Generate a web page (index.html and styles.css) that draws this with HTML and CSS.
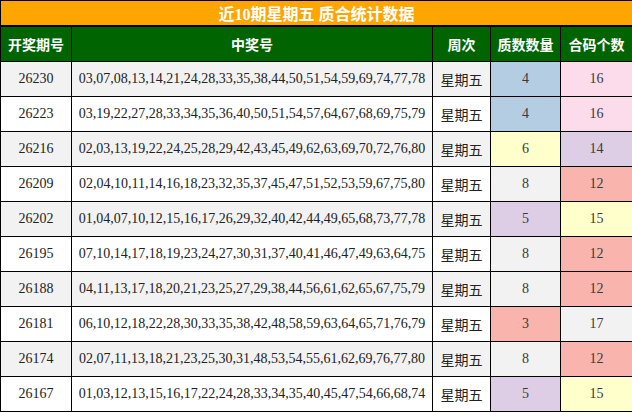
FILE: index.html
```html
<!DOCTYPE html>
<html lang="zh-CN">
<head>
<meta charset="utf-8">
<title>近10期星期五 质合统计数据</title>
<link rel="stylesheet" href="styles.css">
</head>
<body>
<table class="stats">
  <colgroup>
    <col class="c-issue">
    <col class="c-nums">
    <col class="c-week">
    <col class="c-prime">
    <col class="c-comp">
  </colgroup>
  <thead>
    <tr class="title-row"><th colspan="5">近10期星期五 质合统计数据</th></tr>
    <tr class="head-row">
      <th>开奖期号</th><th>中奖号</th><th>周次</th><th>质数数量</th><th>合码个数</th>
    </tr>
  </thead>
  <tbody>
    <tr class="odd"><td>26230</td><td>03,07,08,13,14,21,24,28,33,35,38,44,50,51,54,59,69,74,77,78</td><td>星期五</td><td class="blue">4</td><td class="pink">16</td></tr>
    <tr><td>26223</td><td>03,19,22,27,28,33,34,35,36,40,50,51,54,57,64,67,68,69,75,79</td><td>星期五</td><td class="blue">4</td><td class="pink">16</td></tr>
    <tr class="odd"><td>26216</td><td>02,03,13,19,22,24,25,28,29,42,43,45,49,62,63,69,70,72,76,80</td><td>星期五</td><td class="yellow">6</td><td class="lav">14</td></tr>
    <tr><td>26209</td><td>02,04,10,11,14,16,18,23,32,35,37,45,47,51,52,53,59,67,75,80</td><td>星期五</td><td class="gray">8</td><td class="salmon">12</td></tr>
    <tr class="odd"><td>26202</td><td>01,04,07,10,12,15,16,17,26,29,32,40,42,44,49,65,68,73,77,78</td><td>星期五</td><td class="lav">5</td><td class="yellow">15</td></tr>
    <tr><td>26195</td><td>07,10,14,17,18,19,23,24,27,30,31,37,40,41,46,47,49,63,64,75</td><td>星期五</td><td class="gray">8</td><td class="salmon">12</td></tr>
    <tr class="odd"><td>26188</td><td>04,11,13,17,18,20,21,23,25,27,29,38,44,56,61,62,65,67,75,79</td><td>星期五</td><td class="gray">8</td><td class="salmon">12</td></tr>
    <tr><td>26181</td><td>06,10,12,18,22,28,30,33,35,38,42,48,58,59,63,64,65,71,76,79</td><td>星期五</td><td class="salmon">3</td><td class="gray">17</td></tr>
    <tr class="odd"><td>26174</td><td>02,07,11,13,18,21,23,25,30,31,48,53,54,55,61,62,69,76,77,80</td><td>星期五</td><td class="gray">8</td><td class="salmon">12</td></tr>
    <tr><td>26167</td><td>01,03,12,13,15,16,17,22,24,28,33,34,35,40,45,47,54,66,68,74</td><td>星期五</td><td class="lav">5</td><td class="yellow">15</td></tr>
  </tbody>
</table>
</body>
</html>
```
FILE: styles.css
```css
html, body {
  margin: 0;
  padding: 0;
  background: #ffffff;
}

.stats {
  width: 632px;
  table-layout: fixed;
  border-collapse: collapse;
  font-family: "Liberation Serif", "Noto Sans CJK SC", serif;
  font-size: 14px;
  color: #222222;
}

.c-issue { width: 71px; }
.c-nums { width: 361px; }
.c-week { width: 58px; }
.c-prime { width: 70px; }
.c-comp { width: 72px; }

.stats th,
.stats td {
  border: 1px solid #000000;
  padding: 0;
  text-align: center;
  vertical-align: middle;
  white-space: nowrap;
}

.title-row th {
  height: 24px;
  background: #ffa500;
  color: #ffffff;
  font-size: 16px;
  font-weight: bold;
  border-bottom-width: 2px;
}

.head-row th {
  height: 34px;
  background: #006400;
  color: #ffffff;
  font-family: "Noto Sans CJK SC", sans-serif;
  font-size: 14px;
  font-weight: bold;
}

.stats td {
  height: 34px;
  background: #ffffff;
}

.stats tr.odd td {
  background: #f2f2f2;
}

.stats tr td.blue { background: #b4cde2; }
.stats tr td.pink { background: #fcdbea; }
.stats tr td.yellow { background: #ffffcc; }
.stats tr td.lav { background: #ddcde5; }
.stats tr td.salmon { background: #f9b5ad; }
.stats tr td.gray { background: #f2f2f2; }

.blue, .pink, .yellow, .lav, .salmon, .gray {
  color: #3a3a3a;
}
```
